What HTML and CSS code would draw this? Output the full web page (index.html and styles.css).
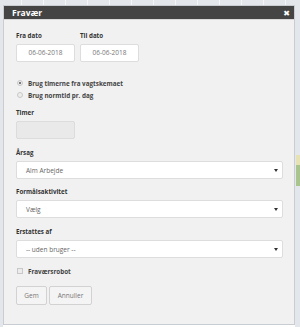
FILE: index.html
```html
<!DOCTYPE html>
<html>
<head>
<meta charset="utf-8">
<link rel="stylesheet" href="styles.css">
</head>
<body>
<div class="dialog">
  <div class="titlebar">
    <span class="title">Fravær</span>
    <span class="close">&#x2716;</span>
  </div>
  <div class="content">
    <div class="dates">
      <div class="field">
        <label class="lbl">Fra dato</label>
        <div class="input date">06-06-2018</div>
      </div>
      <div class="field">
        <label class="lbl">Til dato</label>
        <div class="input date">06-06-2018</div>
      </div>
    </div>
    <div class="radios">
      <div class="radio-row"><span class="radio checked"></span><span class="rtext">Brug timerne fra vagtskemaet</span></div>
      <div class="radio-row"><span class="radio"></span><span class="rtext">Brug normtid pr. dag</span></div>
    </div>
    <div class="group timer-group">
      <label class="lbl">Timer</label>
      <div class="input disabled"></div>
    </div>
    <div class="group g-aarsag">
      <label class="lbl">Årsag</label>
      <div class="select"><span>Alm Arbejde</span><span class="caret"></span></div>
    </div>
    <div class="group g-formaal">
      <label class="lbl">Formålsaktivitet</label>
      <div class="select"><span>Vælg</span><span class="caret"></span></div>
    </div>
    <div class="group g-erstat">
      <label class="lbl">Erstattes af</label>
      <div class="select"><span>-- uden bruger --</span><span class="caret"></span></div>
    </div>
    <div class="check-row"><span class="checkbox"></span><span class="rtext">Fraværsrobot</span></div>
    <div class="buttons">
      <button class="btn btn-gem">Gem</button>
      <button class="btn btn-annuller">Annuller</button>
    </div>
  </div>
</div>
</body>
</html>
```
FILE: styles.css
```css
html, body {
  margin: 0;
  padding: 0;
}
body {
  width: 300px;
  height: 327px;
  overflow: hidden;
  font-family: "Open Sans", "DejaVu Sans", sans-serif;
  background-color: #e3e7ec;
  background-image:
    linear-gradient(to bottom, transparent 155px, #e6e2b4 155px, #e6e2b4 165px, #a9c48c 165px, #a9c48c 186px, transparent 186px),
    repeating-linear-gradient(to right, transparent 0, transparent 21px, #f3f5f7 21px, #f3f5f7 22px);
  background-size: 4px 100%, 100% 100%;
  background-position: right top, left top;
  background-repeat: no-repeat, no-repeat;
}
.dialog {
  margin: 5px 0 0 3px;
  width: 290px;
  height: 318px;
  background: #f1f1f1;
  border: 1px solid #c9ccd0;
  box-shadow: 0 2px 0 #ffffff, 0 3px 0 #c8c8c8;
  display: flex;
  flex-direction: column;
}
.titlebar {
  height: 13px;
  background: #444444;
  display: flex;
  align-items: center;
  justify-content: space-between;
  padding: 0 4px 0 8px;
  border-bottom: 1px solid #d8d8d8;
}
.title {
  color: #ffffff;
  font-weight: bold;
  font-size: 8.5px;
  line-height: 13px;
}
.close {
  color: #ffffff;
  font-size: 8px;
  font-weight: bold;
  line-height: 13px;
}
.content {
  padding: 11px 0 0 12px;
  display: flex;
  flex-direction: column;
}
.lbl {
  display: block;
  font-size: 6.2px;
  font-weight: bold;
  color: #333333;
  line-height: 10px;
  height: 10px;
  margin-bottom: 3px;
}
.dates {
  display: flex;
  gap: 5px;
}
.input {
  box-sizing: border-box;
  width: 59px;
  height: 18px;
  background: #ffffff;
  border: 1px solid #dddddd;
  border-radius: 2px;
}
.date {
  font-size: 6.5px;
  color: #777777;
  text-align: center;
  line-height: 16px;
}
.disabled {
  background: #e9e9e9;
  border-color: #dcdcdc;
}
.radios {
  margin-top: 15px;
  display: flex;
  flex-direction: column;
}
.radio-row, .check-row {
  display: flex;
  align-items: center;
  height: 12px;
  padding-left: 1px;
}
.radio {
  box-sizing: border-box;
  width: 6px;
  height: 6px;
  border-radius: 50%;
  border: 1px solid #c8c8c8;
  background: #ececec;
  margin-right: 5px;
  position: relative;
}
.radio.checked::after {
  content: "";
  position: absolute;
  left: 1px;
  top: 1px;
  width: 2px;
  height: 2px;
  border-radius: 50%;
  background: #555555;
}
.rtext {
  font-size: 6.3px;
  font-weight: bold;
  color: #444444;
}
.timer-group { margin-top: 7px; }
.g-aarsag { margin-top: 9px; }
.g-formaal { margin-top: 8px; }
.g-erstat { margin-top: 9px; }
.select {
  box-sizing: border-box;
  width: 267px;
  height: 18px;
  background: #ffffff;
  border: 1px solid #dddddd;
  border-radius: 2px;
  display: flex;
  align-items: center;
  justify-content: space-between;
  padding: 0 4px 0 9px;
  font-size: 6.5px;
  color: #666666;
}
.caret {
  width: 0;
  height: 0;
  border-left: 2px solid transparent;
  border-right: 2px solid transparent;
  border-top: 3px solid #333333;
}
.check-row {
  margin-top: 7px;
}
.checkbox {
  box-sizing: border-box;
  width: 6px;
  height: 6px;
  border: 1px solid #c8c8c8;
  background: #ececec;
  margin-right: 5px;
}
.buttons {
  margin-top: 9px;
  display: flex;
  gap: 2px;
}
.btn {
  box-sizing: border-box;
  height: 19px;
  border: 1px solid #d2d2d2;
  border-radius: 2px;
  background: #f4f4f4;
  font-family: "Open Sans", "DejaVu Sans", sans-serif;
  font-size: 6.5px;
  color: #777777;
  padding: 0;
}
.btn-gem { width: 31px; }
.btn-annuller { width: 43px; }
```
